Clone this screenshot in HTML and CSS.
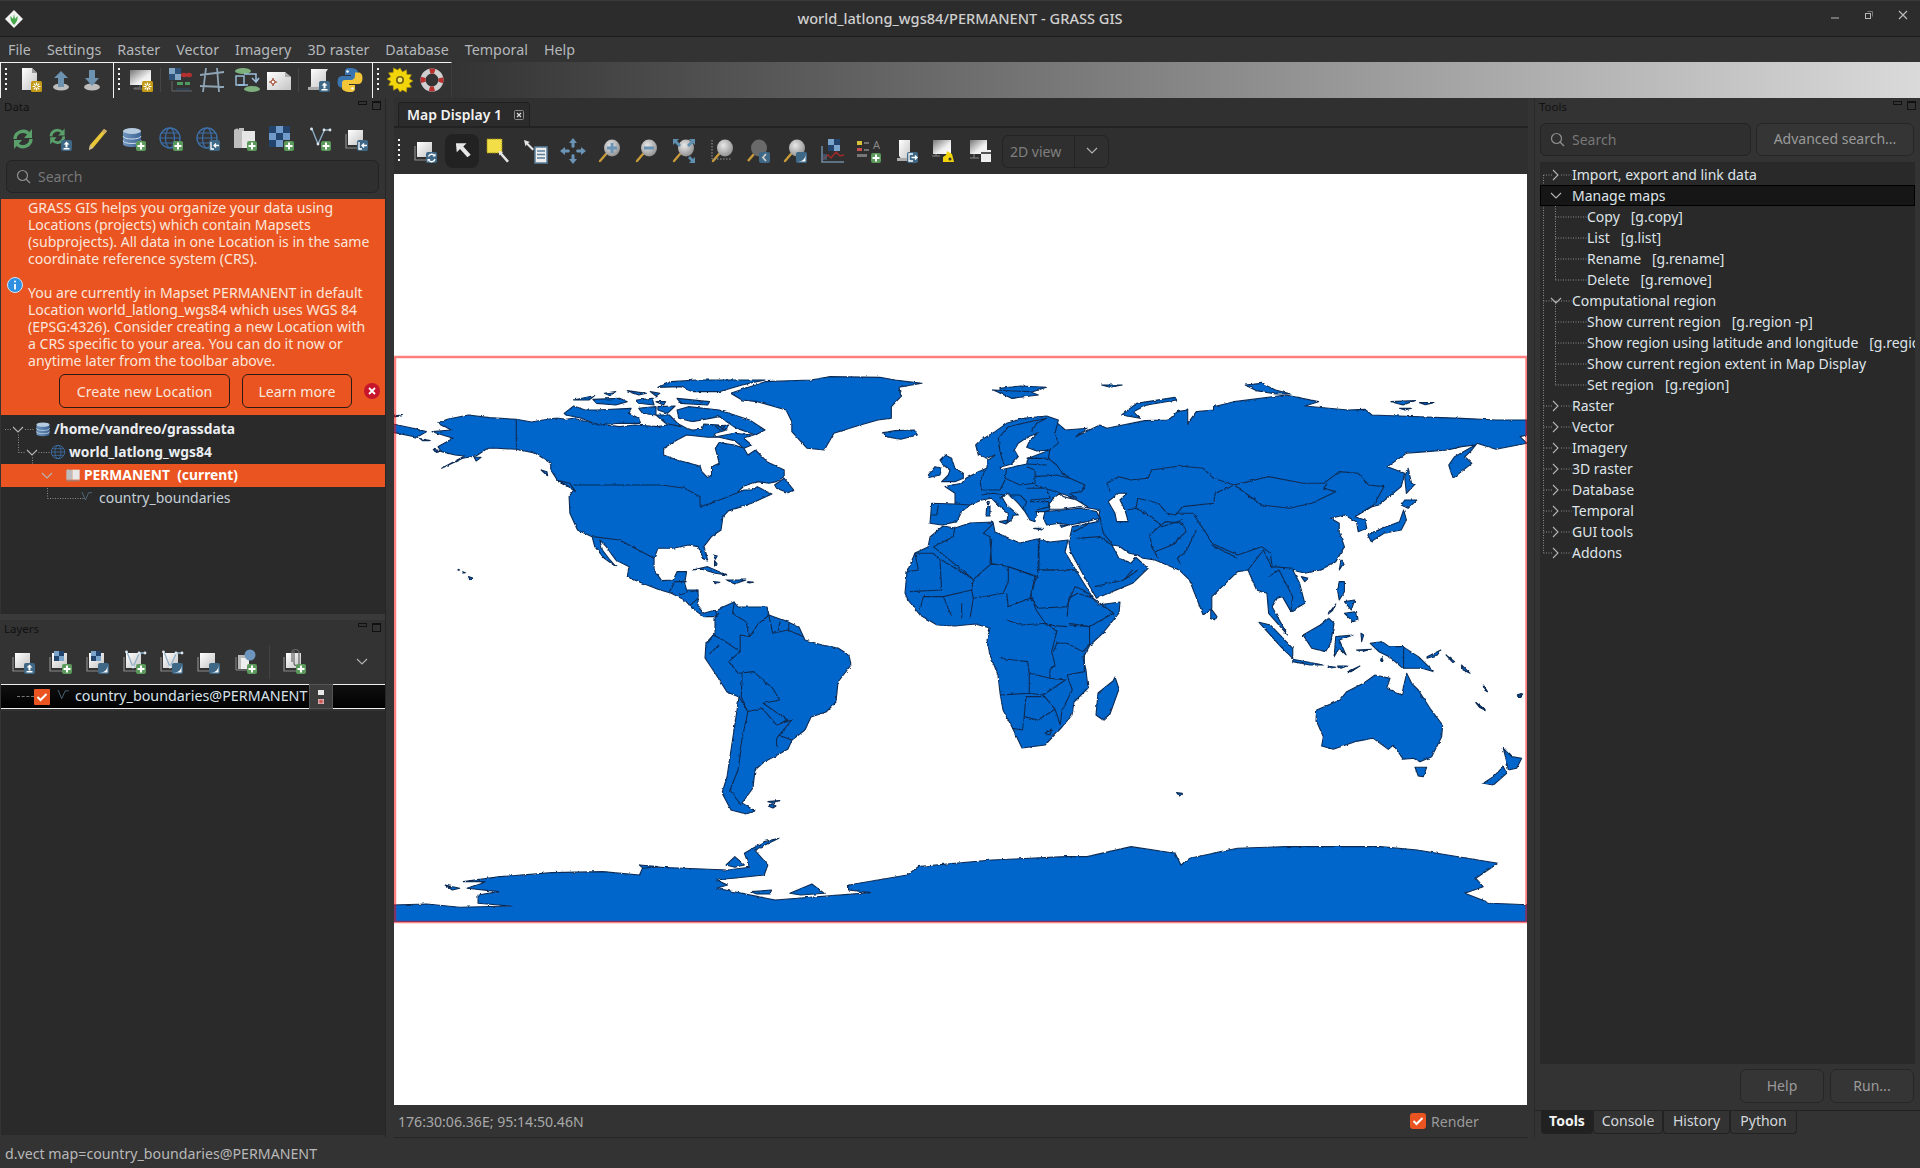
FILE: index.html
```html
<!DOCTYPE html>
<html lang="en">
<head>
<meta charset="utf-8">
<title>world_latlong_wgs84/PERMANENT - GRASS GIS</title>
<link rel="stylesheet" href="styles.css">
</head>
<body>
<svg class="defs" width="0" height="0" aria-hidden="true">
<defs>
<linearGradient id="gw" x1="0" y1="0" x2="1" y2="1"><stop offset="0" stop-color="#fff"/><stop offset="1" stop-color="#c4c4c4"/></linearGradient>
<linearGradient id="gs" x1="0" y1="0" x2="1" y2="1"><stop offset="0" stop-color="#777"/><stop offset=".6" stop-color="#eee"/><stop offset="1" stop-color="#fff"/></linearGradient>
<linearGradient id="gb" x1="0" y1="0" x2="1" y2="0"><stop offset="0" stop-color="#6f94bd"/><stop offset="1" stop-color="#3d6494"/></linearGradient>
<radialGradient id="gg" cx=".4" cy=".35" r=".7"><stop offset="0" stop-color="#e8e8e8"/><stop offset="1" stop-color="#8d8d8d"/></radialGradient>
<clipPath id="clipr"><rect x="394" y="357" width="1133" height="565"/></clipPath>
<g id="base"><path d="M3 8v14h15" fill="none" stroke="#8a8a8a" stroke-width="1.2"/><rect x="5" y="4" width="15" height="15" fill="url(#gw)"/></g>
<g id="plus"><rect x="15" y="15" width="10" height="10" rx="2" fill="#5b9a5b"/><path d="M20 16.500v7M16.500 20h7" stroke="#fff" stroke-width="2"/></g>
<g id="badge"><rect x="14" y="14" width="11" height="11" rx="2" fill="#3f6887"/></g>
<g id="bup"><use href="#badge"/><path d="M19.500 15.500l-3 3h2v3h2v-3h2zM16.500 22v1.500h6V22" fill="#fff"/></g>
<g id="bmoon"><use href="#badge"/><path d="M23.500 16v7.500H16c5 0 7.500-3 7.500-7.500z" fill="#fff"/></g>
<g id="bin"><use href="#badge"/><path d="M16 16v7h3M24 19.500h-5M21 17.500l-2 2 2 2" fill="none" stroke="#fff" stroke-width="1.300"/></g>
<g id="bout"><use href="#badge"/><path d="M20 16h-4v7h4M18.500 19.500h5.500M22 17.500l2 2-2 2" fill="none" stroke="#fff" stroke-width="1.300"/></g>
<g id="brel"><use href="#badge"/><path d="M16.500 18.500a3.500 3.500 0 0 1 6-1M23 21a3.500 3.500 0 0 1-6 1.500" fill="none" stroke="#fff" stroke-width="1.400"/><path d="M23.500 15.500v3h-3zM15.500 24v-3h3z" fill="#fff"/></g>
<g id="bgold"><rect x="14" y="14" width="11" height="11" rx="1.500" fill="#c39a16"/><path d="M19.500 15.500v8M15.500 19.500h8M16.700 16.700l5.600 5.600M22.300 16.700l-5.600 5.600" stroke="#fff" stroke-width="1.200"/><circle cx="19.500" cy="19.500" r="1.300" fill="#c39a16"/></g>
<g id="chk"><path fill="#7aa4cc" d="M7 2h5v5H7zM12 7h5v5h-5z"/><path fill="#23456d" d="M12 2h5v5h-5zM7 7h5v5H7z"/></g>
<g id="vec"><path d="M6 3l6 15 6-13M18 4h6" fill="none" stroke="#8fb0c8" stroke-width="1.300"/><circle cx="5.500" cy="3" r="1.400" fill="#dfe8f0"/><circle cx="12" cy="18" r="1.400" fill="#dfe8f0"/><circle cx="18" cy="4" r="1.400" fill="#dfe8f0"/><circle cx="24" cy="4" r="1.400" fill="#dfe8f0"/></g>
<g id="globe"><circle cx="12" cy="12" r="10" fill="none" stroke="#3d6fa8" stroke-width="1.400"/><ellipse cx="12" cy="12" rx="4.500" ry="10" fill="none" stroke="#3d6fa8" stroke-width="1.200"/><path d="M2 12h20M3.500 7h17M3.500 17h17" stroke="#3d6fa8" stroke-width="1.200"/></g>
<g id="disk"><path d="M2 5v13c0 4 18 4 18 0V5z" fill="url(#gb)"/><ellipse cx="11" cy="5" rx="9" ry="3" fill="#b7cbe0"/><path d="M2 10c0 4 18 4 18 0M2 14.500c0 4 18 4 18 0" fill="none" stroke="#cfdbe8" stroke-width="1"/></g>
<g id="mapset"><path d="M2 5c2-2 4-2 5 0v14H2zM7 4h4v15H7z" fill="#bcbcbc"/><rect x="11" y="4" width="11" height="15" fill="#e8e8e8"/><path d="M2 20h20v1.500H2z" fill="#8f8f8f"/></g>
<g id="glass"><path d="M9 16l-6 7" stroke="#c79a3a" stroke-width="2.400" stroke-linecap="round"/><ellipse cx="15" cy="10" rx="8" ry="8.500" fill="url(#gg)"/></g>
<g id="refresh"><path d="M5 13a8 8 0 0 1 14-5" fill="none" stroke="#5aa06a" stroke-width="3.400"/><path d="M22 3v9h-8z" fill="#5aa06a"/><path d="M21 13a8 8 0 0 1-14 5" fill="none" stroke="#5aa06a" stroke-width="3.400"/><path d="M4 23v-9h8z" fill="#5aa06a"/></g>

<g id="i-new"><path d="M5 1h10l5 5v17H5z" fill="url(#gw)"/><path d="M15 1v5h5z" fill="#999"/><use href="#bgold"/></g>
<g id="i-up"><ellipse cx="13" cy="20" rx="8" ry="3.500" fill="#bdbdbd"/><path d="M13 4l7 7h-4v9h-6v-9H6z" fill="#6d93b0"/></g>
<g id="i-down"><ellipse cx="13" cy="20" rx="8" ry="3.500" fill="#bdbdbd"/><path d="M10 3h6v8h4l-7 8-7-8h4z" fill="#6d93b0"/></g>
<g id="i-mon"><rect x="2" y="3" width="21" height="15" fill="url(#gs)"/><path d="M12 18v3H6v1h12v-1h-4" fill="none" stroke="#777"/><use href="#bgold"/></g>
<g id="i-mod"><path fill="#83a6c4" d="M2 1h6v6H2zM8 7h6v6H8z"/><path fill="#2e527a" d="M8 1h6v6H8zM2 7h6v6H2z"/><ellipse cx="17" cy="8" rx="3" ry="2.200" fill="#b43030"/><ellipse cx="22" cy="8" rx="3" ry="2.200" fill="#b43030"/><path d="M10 15h6v3h-6zM18 15h5v3h-5z" fill="#4e9a60"/><path d="M9 21h14v3H9z" fill="#2f3f50"/><path d="M5 14v10h20" fill="none" stroke="#666"/></g>
<g id="i-grid"><path d="M7 1L4 25M18 1l2 24M1 8l24-3M1 19l24 1" stroke="#8fa4b4" stroke-width="1.800" fill="none"/></g>
<g id="i-flow"><ellipse cx="9" cy="4" rx="8" ry="3" fill="#7eb07e"/><ellipse cx="18" cy="22" rx="8" ry="3" fill="#7eb07e"/><rect x="2" y="9" width="8" height="9" fill="none" stroke="#9ec2e0" stroke-width="1.400"/><path d="M10 7h12v7M18 11l4 4 3-4M14 18H4" fill="none" stroke="#9ec2e0" stroke-width="1.500"/></g>
<g id="i-geo"><path d="M1 5h18l6 5v13H1z" fill="url(#gw)"/><path d="M19 5v5h6z" fill="#aaa"/><path d="M7 11v8M3 15h8" stroke="#9a3a20" stroke-width="1.200"/><circle cx="7" cy="15" r="2" fill="#fff" stroke="#9a3a20"/></g>
<g id="i-script"><path d="M6 2h17l-2 3v16H4c2-1 2-2 2-4z" fill="url(#gw)"/><path d="M3 20h15v3H3z" fill="#aaa"/><use href="#bup"/></g>
<g id="i-py"><path d="M12.800 1C8 1 8 3 8 5v3h6v1H5c-3 0-4.500 2-4.500 6s2 5.500 4 5.500H8v-3.500c0-2 2-4 4-4h6c2 0 3-1 3-3V5c0-2-3-4-8.200-4z" fill="#3a75b0"/><path d="M13.200 25c4.800 0 4.800-2 4.800-4v-3h-6v-1h9c3 0 4.500-2 4.500-6s-2-5.500-4-5.500H18v3.500c0 2-2 4-4 4H8c-2 0-3 1-3 3v5c0 2 3 4 8.200 4z" fill="#f2c637"/><circle cx="10.500" cy="4.500" r="1.300" fill="#fff"/><circle cx="15.500" cy="21.500" r="1.300" fill="#fff"/></g>
<g id="i-gear"><path d="M13 1l2.500 4 4-2.200.3 4.600 4.600.3-2.200 4 3.800 2.300-3.800 2.300 2.200 4-4.600.3-.3 4.600-4-2.200L13 25l-2.500-4-4 2.200-.3-4.600-4.600-.3 2.200-4L0 12l3.800-2.200-2.200-4 4.600-.3.300-4.600 4 2.200z" fill="#f2d40a" stroke="#b09308" stroke-width=".6"/><circle cx="13" cy="13" r="4" fill="#6b5d12"/><circle cx="13" cy="13" r="2.400" fill="#f7e86a"/></g>
<g id="i-help"><circle cx="13" cy="13" r="9" fill="none" stroke="#cfcfcf" stroke-width="5"/><circle cx="13" cy="13" r="9" fill="none" stroke="#b83030" stroke-width="5" stroke-dasharray="5 9.137" stroke-dashoffset="2.500"/></g>
<g id="i-ref2"><g transform="scale(.8)"><use href="#refresh"/></g><use href="#bup"/></g>
<g id="i-pencil"><path d="M20 3l3 2L9 22l-4 2 1-5z" fill="#e8c83a"/><path d="M20 3l3 2-2 2.400-3-2z" fill="#c9a86a"/><path d="M6 19l3 3-4 2z" fill="#d0c0a0"/></g>
<g id="i-dbp"><use href="#disk"/><use href="#plus"/></g>
<g id="i-gp"><use href="#globe"/><use href="#plus"/></g>
<g id="i-gi"><use href="#globe"/><use href="#bin"/></g>
<g id="i-mp"><path d="M2 4c2-2 4-2 5 0v18H2z M7 2h5v20H7z" fill="#bdbdbd"/><rect x="10" y="5" width="13" height="17" fill="#e6e6e6"/><use href="#plus"/></g>
<g id="i-rp"><path fill="#6f9aca" d="M7 0h7v7H7zM0 7h7v7H0zM14 7h7v7h-7zM7 14h7v7H7z"/><path fill="#23456d" d="M0 0h7v7H0zM14 0h7v7h-7zM7 7h7v7H7zM0 14h7v7H0z"/><use href="#plus"/></g>
<g id="i-vp"><use href="#vec"/><use href="#plus"/></g>
<g id="i-bi"><use href="#base"/><use href="#bin"/></g>
<g id="i-bu"><use href="#base"/><use href="#bup"/></g>
<g id="i-brp"><use href="#base"/><use href="#chk"/><use href="#plus"/></g>
<g id="i-brm"><use href="#base"/><use href="#chk"/><use href="#bmoon"/></g>
<g id="i-bvp"><use href="#base"/><use href="#vec"/><use href="#plus"/></g>
<g id="i-bvm"><use href="#base"/><use href="#vec"/><use href="#bmoon"/></g>
<g id="i-bm"><use href="#base"/><use href="#bmoon"/></g>
<g id="i-wms"><path d="M4 8v13h11" fill="none" stroke="#8a8a8a"/><rect x="6" y="6" width="11" height="14" fill="#bbb"/><rect x="9" y="9" width="8" height="11" fill="#eee"/><g transform="translate(12,0) scale(.5)"><circle cx="12" cy="12" r="11" fill="#6d95bd"/></g><use href="#plus"/></g>
<g id="i-clip"><use href="#base"/><path d="M13 2v12a2.500 2.500 0 0 0 5 0V4a3.500 3.500 0 0 0-7 0v9" fill="none" stroke="#666" stroke-width="1.200"/><use href="#plus"/></g>
<g id="i-br"><use href="#base"/><use href="#brel"/></g>
<g id="i-arrow"><path d="M6 4h13l-4 4 9 10-4 3-9-10-4 4z" fill="#e6e6e6" transform="translate(2,2) scale(.82)"/></g>
<g id="i-sel"><rect x="1" y="1" width="15" height="14" fill="#f2de47" stroke="#9d8c1a" stroke-dasharray="1.500 1"/><path d="M13 13l4 1-1 1 7 8-2 1.500-7-8-1 1z" fill="#e6e6e6"/></g>
<g id="i-query"><path d="M1 2l6 2-2 1 6 6-1.500 1.500-6-6-1 2z" fill="#e6e6e6"/><rect x="12" y="9" width="12" height="16" fill="#eee" stroke="#5a7f9c" stroke-width="1.500"/><path d="M14 13h8M14 16.500h8M14 20h8" stroke="#5a7f9c" stroke-width="1.500"/></g>
<g id="i-pan"><path d="M13 0l4 5h-2.500v4l-1.500 1-1.500-1V5H9zM13 26l4-5h-2.500v-4L13 16l-1.500 1v4H9zM0 13l5-4v2.500h4l1 1.500-1 1.500H5V17zM26 13l-5-4v2.500h-4L16 13l1 1.500h4V17z" fill="#6a93b5"/></g>
<g id="i-zi"><use href="#glass"/><path d="M15 5v10M10 10h10" stroke="#6a93b5" stroke-width="3"/></g>
<g id="i-zo"><use href="#glass"/><path d="M10 10h10" stroke="#6a93b5" stroke-width="3"/></g>
<g id="i-zr"><use href="#glass"/><path d="M2 1h6L6 3l4 4-2 2-4-4-2 2zM24 1v6l-2-2-4 4-2-2 4-4-2-2zM24 25h-6l2-2-3-3 2-2 3 3 2-2z" fill="#5f8fb0"/></g>
<g id="i-zs"><g transform="translate(2,0)"><use href="#glass"/></g><path d="M4 2v19h20" fill="none" stroke="#999" stroke-dasharray="1.500 1.500"/></g>
<g id="i-zb"><path d="M9 16l-6 7" stroke="#c79a3a" stroke-width="2.400"/><ellipse cx="14" cy="10" rx="8" ry="8.500" fill="#6a6a6a"/><use href="#badge"/><path d="M21 16l-3 3.500 3 3.500" fill="none" stroke="#ccc" stroke-width="1.800"/></g>
<g id="i-zm"><use href="#glass"/><use href="#bmoon"/></g>
<g id="i-chart"><path fill="#7aa4cc" d="M9 1h6v6H9zM15 7h6v6h-6z"/><path fill="#23456d" d="M15 1h6v6h-6zM9 7h6v6H9z"/><path d="M3 8v16h22" fill="none" stroke="#6f8ba3" stroke-width="1.500"/><path d="M4 21l5-4 3 3 5-6 4 4 4-1" fill="none" stroke="#a02a2a" stroke-width="1.500"/><path d="M4 16h4v6H4z" fill="#4a6a86" opacity=".6"/></g>
<g id="i-legend"><rect x="1" y="3" width="5" height="4" fill="#d8c23a"/><rect x="1" y="10" width="5" height="3" fill="#c85050"/><path d="M8 5h5M8 12h5" stroke="#888" stroke-width="1.500"/><rect x="1" y="16" width="10" height="3" fill="#777"/><text x="17" y="11" class="ic-t">A</text><use href="#plus"/></g>
<g id="i-mapout"><path d="M6 2h11v20H6c2-1 2-2 0-4z" fill="url(#gw)"/><path d="M4 20h10v3H4z" fill="#aaa"/><use href="#bout"/></g>
<g id="i-monimg"><rect x="3" y="2" width="18" height="14" fill="url(#gs)"/><path d="M2 18h8M6 16v2" stroke="#888"/><path d="M13 24v-5l3-2 1-4 5 3 2 8z" fill="#f2d40a"/><circle cx="20" cy="21" r="1.500" fill="#333"/></g>
<g id="i-monw"><rect x="3" y="2" width="17" height="14" fill="url(#gs)"/><path d="M3 20h9M7 16v4" stroke="#888"/><rect x="14" y="12" width="10" height="12" fill="#eee"/><rect x="14" y="14" width="10" height="2" fill="#555"/></g>
<g id="i-vsmall"><path d="M3 3l5 12 5-11M13 4h5" fill="none" stroke="#5b7a90" stroke-width="1.100"/></g>
<g id="logo"><path d="M9 0l9 9-9 9-9-9z" fill="#f2f2f2"/><path d="M9 15C6 12 5 9 5.500 6L8 9l1-5 1 5 2.500-3c.5 3-.5 6-3.500 9z" fill="#45a84a"/></g>
<g id="searchi"><circle cx="6.500" cy="6.500" r="5" fill="none" stroke="#8f8f8f" stroke-width="1.200"/><path d="M10 10l4 4" stroke="#8f8f8f" stroke-width="1.200"/></g>
<g id="chev-d"><path d="M1 1l5 5 5-5" fill="none" stroke="#b5b5b5" stroke-width="1.100"/></g>
<g id="chev-r"><path d="M1 1l5 5-5 5" fill="none" stroke="#b5b5b5" stroke-width="1.100"/></g>
<filter id="rough" filterUnits="userSpaceOnUse" x="380" y="174" width="1160" height="800"><feTurbulence type="fractalNoise" baseFrequency=".22" numOctaves="2" seed="4" result="n"/><feDisplacementMap in="SourceGraphic" in2="n" scale="2.600" xChannelSelector="R" yChannelSelector="G"/></filter>
</defs>
</svg>

<header class="titlebar">
  <svg class="logo" viewBox="0 0 18 18"><use href="#logo"/></svg>
  <span class="title">world_latlong_wgs84/PERMANENT - GRASS GIS</span>
  <div class="winctl">
    <svg class="wc" viewBox="0 0 12 12"><path d="M2 9h8" stroke="#b8b8b8" stroke-width="1"/></svg>
    <svg class="wc" viewBox="0 0 12 12"><rect x="2.500" y="4.500" width="5" height="5" fill="none" stroke="#b8b8b8"/><path d="M4.500 2.500h5v5" fill="none" stroke="#777"/></svg>
    <svg class="wc" viewBox="0 0 12 12"><path d="M2 2l8 8M10 2l-8 8" stroke="#b8b8b8" stroke-width="1.200"/></svg>
  </div>
</header>

<nav class="menubar">
  <span>File</span><span>Settings</span><span>Raster</span><span>Vector</span><span>Imagery</span><span>3D raster</span><span>Database</span><span>Temporal</span><span>Help</span>
</nav>

<div class="toolbar">
  <div class="tseg seg1">
    <i class="grip"></i>
    <svg class="ic" viewBox="0 0 26 26"><use href="#i-new"/></svg>
    <svg class="ic" viewBox="0 0 26 26"><use href="#i-up"/></svg>
    <svg class="ic" viewBox="0 0 26 26"><use href="#i-down"/></svg>
  </div>
  <div class="tseg seg2">
    <i class="grip"></i>
    <svg class="ic" viewBox="0 0 26 26"><use href="#i-mon"/></svg>
    <i class="vsep"></i>
    <svg class="ic" viewBox="0 0 26 26"><use href="#i-mod"/></svg>
    <svg class="ic" viewBox="0 0 26 26"><use href="#i-grid"/></svg>
    <svg class="ic wideb" viewBox="0 0 26 26"><use href="#i-flow"/></svg>
    <svg class="ic" viewBox="0 0 26 26"><use href="#i-geo"/></svg>
    <i class="vsep"></i>
    <svg class="ic" viewBox="0 0 26 26"><use href="#i-script"/></svg>
    <svg class="ic" viewBox="0 0 26 26"><use href="#i-py"/></svg>
  </div>
  <div class="tseg seg3">
    <i class="grip"></i>
    <svg class="ic" viewBox="0 0 26 26"><use href="#i-gear"/></svg>
    <svg class="ic" viewBox="0 0 26 26"><use href="#i-help"/></svg>
  </div>
  <div class="tgrad"></div>
</div>

<main class="main">
  <aside class="leftdock">
    <section class="panel data">
      <div class="ptitle"><span>Data</span><i class="pmin"></i><i class="pmax"></i></div>
      <div class="ptools">
        <svg class="ic" viewBox="0 0 26 26"><use href="#refresh"/></svg>
        <svg class="ic" viewBox="0 0 26 26"><use href="#i-ref2"/></svg>
        <svg class="ic" viewBox="0 0 26 26"><use href="#i-pencil"/></svg>
        <svg class="ic" viewBox="0 0 26 26"><use href="#i-dbp"/></svg>
        <svg class="ic" viewBox="0 0 26 26"><use href="#i-gp"/></svg>
        <svg class="ic" viewBox="0 0 26 26"><use href="#i-gi"/></svg>
        <svg class="ic" viewBox="0 0 26 26"><use href="#i-mp"/></svg>
        <svg class="ic" viewBox="0 0 26 26"><use href="#i-rp"/></svg>
        <svg class="ic" viewBox="0 0 26 26"><use href="#i-vp"/></svg>
        <svg class="ic" viewBox="0 0 26 26"><use href="#i-bi"/></svg>
      </div>
      <div class="searchbox wide"><svg class="si" viewBox="0 0 15 15"><use href="#searchi"/></svg><span>Search</span></div>
      <div class="infobar">
        <div class="infomsg">
          <svg class="infoi" viewBox="0 0 16 16"><circle cx="8" cy="8" r="7.500" fill="#2f8fe0" stroke="#cfe4f5"/><circle cx="8" cy="4.500" r="1" fill="#fff"/><path d="M8 7v5.500" stroke="#fff" stroke-width="1.800"/></svg>
          <p>GRASS GIS helps you organize your data using<br>Locations (projects) which contain Mapsets<br>(subprojects). All data in one Location is in the same<br>coordinate reference system (CRS).<br><br>You are currently in Mapset PERMANENT in default<br>Location world_latlong_wgs84 which uses WGS 84<br>(EPSG:4326). Consider creating a new Location with<br>a CRS specific to your area. You can do it now or<br>anytime later from the toolbar above.</p>
        </div>
        <div class="infobtns">
          <button class="obtn b1">Create new Location</button>
          <button class="obtn b2">Learn more</button>
          <svg class="xi" viewBox="0 0 16 16"><circle cx="8" cy="8" r="8" fill="#c7162b"/><path d="M5 5l6 6M11 5l-6 6" stroke="#fff" stroke-width="1.800"/></svg>
        </div>
      </div>
      <div class="dtree">
        <svg class="dots" viewBox="0 0 386 100" width="386" height="100"><path d="M4 14.500h30M17.500 14.500v23M17.500 37.500h32M31.500 37.500v23M31.500 60.500h33M46.500 60.500v23M46.500 83.500h36"/></svg>
        <div class="drow l0"><svg class="chv" viewBox="0 0 12 8"><use href="#chev-d"/></svg><svg class="ti" viewBox="0 0 22 22"><use href="#disk"/></svg><b>/home/vandreo/grassdata</b></div>
        <div class="drow l1"><svg class="chv" viewBox="0 0 12 8"><use href="#chev-d"/></svg><svg class="ti" viewBox="0 0 24 24"><use href="#globe"/></svg><b>world_latlong_wgs84</b></div>
        <div class="drow l2 sel"><svg class="chv" viewBox="0 0 12 8"><use href="#chev-d"/></svg><svg class="ti" viewBox="0 0 24 24"><use href="#mapset"/></svg><b>PERMANENT  (current)</b></div>
        <div class="drow l3"><svg class="ti" viewBox="0 0 24 24"><use href="#i-vsmall"/></svg><span>country_boundaries</span></div>
      </div>
    </section>
    <div class="sash"></div>
    <section class="panel layers">
      <div class="ptitle"><span>Layers</span><i class="pmin"></i><i class="pmax"></i></div>
      <div class="ptools ltools">
        <svg class="ic" viewBox="0 0 26 26"><use href="#i-bu"/></svg>
        <svg class="ic" viewBox="0 0 26 26"><use href="#i-brp"/></svg>
        <svg class="ic" viewBox="0 0 26 26"><use href="#i-brm"/></svg>
        <svg class="ic" viewBox="0 0 26 26"><use href="#i-bvp"/></svg>
        <svg class="ic" viewBox="0 0 26 26"><use href="#i-bvm"/></svg>
        <svg class="ic" viewBox="0 0 26 26"><use href="#i-bm"/></svg>
        <svg class="ic" viewBox="0 0 26 26"><use href="#i-wms"/></svg>
        <i class="vsep lsep"></i>
        <svg class="ic" viewBox="0 0 26 26"><use href="#i-clip"/></svg>
        <svg class="lchev" viewBox="0 0 12 8"><use href="#chev-d"/></svg>
      </div>
      <div class="lrow">
        <i class="ldots"></i>
        <span class="cbox"><svg viewBox="0 0 16 16"><path d="M3.500 8l3 3 6-6" fill="none" stroke="#fff" stroke-width="2"/></svg></span>
        <svg class="ti lv" viewBox="0 0 24 24"><use href="#i-vsmall"/></svg>
        <span class="ltext">country_boundaries@PERMANENT</span>
        <span class="lctl"><i class="lc1"></i><i class="lc2"></i></span>
      </div>
      <div class="lempty"></div>
    </section>
  </aside>

  <section class="center">
    <div class="tabstrip">
      <div class="tab"><span>Map Display 1</span><svg class="tabx" viewBox="0 0 10 10"><rect x=".5" y=".5" width="9" height="9" rx="1" fill="none" stroke="#8a8a8a"/><path d="M3 3l4 4M7 3L3 7" stroke="#ddd" stroke-width="1.200"/></svg></div>
    </div>
    <div class="maptools">
      <i class="grip"></i>
      <svg class="ic" viewBox="0 0 26 26"><use href="#i-br"/></svg>
      <svg class="ic active" viewBox="0 0 26 26"><use href="#i-arrow"/></svg>
      <svg class="ic" viewBox="0 0 26 26"><use href="#i-sel"/></svg>
      <svg class="ic" viewBox="0 0 26 26"><use href="#i-query"/></svg>
      <svg class="ic" viewBox="0 0 26 26"><use href="#i-pan"/></svg>
      <svg class="ic" viewBox="0 0 26 26"><use href="#i-zi"/></svg>
      <svg class="ic" viewBox="0 0 26 26"><use href="#i-zo"/></svg>
      <svg class="ic" viewBox="0 0 26 26"><use href="#i-zr"/></svg>
      <svg class="ic" viewBox="0 0 26 26"><use href="#i-zs"/></svg>
      <svg class="ic" viewBox="0 0 26 26"><use href="#i-zb"/></svg>
      <svg class="ic" viewBox="0 0 26 26"><use href="#i-zm"/></svg>
      <svg class="ic" viewBox="0 0 26 26"><use href="#i-chart"/></svg>
      <svg class="ic" viewBox="0 0 26 26"><use href="#i-legend"/></svg>
      <svg class="ic" viewBox="0 0 26 26"><use href="#i-mapout"/></svg>
      <svg class="ic" viewBox="0 0 26 26"><use href="#i-monimg"/></svg>
      <svg class="ic" viewBox="0 0 26 26"><use href="#i-monw"/></svg>
      <div class="combo"><span>2D view</span><b><svg viewBox="0 0 12 8"><use href="#chev-d"/></svg></b></div>
    </div>
    <div class="map">
      <svg class="mapsvg" viewBox="394 174 1133 931" preserveAspectRatio="none">
        <g clip-path="url(#clipr)">
        <g filter="url(#rough)">
        <!-- South America in screen space -->
        <path class="land2" d="M715,612 723,607 734,602 738,607 767,607 769,615 788,622 799,627 805,640 822,645 838,648 849,655 851,665 838,682 836,702 826,712 811,717 805,730 792,740 788,749 781,753 764,762 755,770 753,788 742,803 755,811 746,814 731,810 722,793 727,777 731,750 739,697 727,692 715,673 705,658 706,643 715,633Z"/>
        <path class="land2" d="M768,806 772,804 776,806 773,808Z"/>
        <path class="bdl" d="M741,750 738,770 730,790 741,805"/>

        <!-- Africa -->
        <path class="land2" d="M943,526 955,528 970,523 993,522 995,532 1020,543 1037,539 1050,542 1068,540 1065,552 1080,577 1093,598 1098,605 1120,602 1119,613 1103,633 1090,645 1083,658 1086,670 1088,688 1074,702 1072,715 1062,727 1045,745 1022,748 1012,727 1003,710 1000,693 998,675 990,655 987,640 990,628 975,624 955,626 937,625 920,615 908,600 905,593 907,572 915,553 928,547 930,537Z"/>
        <path class="land2" d="M1115,677 1119,689 1110,714 1103,720 1096,715 1098,693 1113,681Z"/>

        <!-- zoom-7 space -->
        <g transform="translate(390,350) scale(.3827,.3333)" class="land">
          <path d="M110,245 160,240 125,218 150,208 205,195 260,203 330,208 370,216 400,210 435,204 460,208 480,205 540,222 600,230 640,225 700,230 750,220 775,235 790,240 815,238 820,222 860,225 880,240 850,250 845,262 900,250 950,255 925,265 945,285 925,295 935,315 955,300 985,335 1030,360 1030,380 1010,395 990,400 960,395 925,408 905,430 925,420 945,420 960,410 985,425 998,432 948,458 920,470 885,482 870,500 865,540 840,560 820,590 830,630 820,628 805,590 780,585 740,595 700,595 690,625 690,660 710,692 740,690 750,665 775,665 770,700 775,720 805,720 805,770 820,790 850,780 855,800 835,800 820,800 790,775 770,750 735,730 700,718 650,695 620,680 625,650 590,630 565,590 548,570 555,600 575,630 590,650 560,625 535,590 528,560 490,540 470,490 468,440 480,420 440,395 420,360 420,340 380,310 330,298 280,295 255,295 225,318 190,325 135,355 195,318 170,315 135,305 125,290 165,265Z"/>
          <path class="sea" d="M775,255 750,270 715,295 715,315 750,330 810,348 815,365 830,383 840,375 840,350 860,340 855,315 850,295 860,278 900,285 925,295 900,272 860,262 830,262 800,258Z"/>
          <path d="M850,228 885,225 880,238 860,240Z"/><path d="M858,228 875,228 870,236Z"/>
          <path d="M890,130 980,95 1100,90 1150,80 1280,82 1320,90 1390,100 1330,112 1335,140 1310,170 1310,205 1275,210 1220,228 1160,250 1135,300 1090,295 1050,245 1050,215 1035,180 960,155 920,150Z"/>
          <path d="M1290,248 1320,242 1370,240 1378,255 1335,268 1295,260Z"/>
          <path d="M735,95 800,90 980,90 920,105 860,125 790,125 760,110 700,112Z"/>
          <path d="M750,145 835,155 830,165 760,160Z"/>
          <path d="M480,150 535,137 520,150Z"/><path d="M560,130 590,125 575,137Z"/><path d="M620,122 670,130 650,135Z"/><path d="M680,125 705,130 695,138Z"/>
          <path d="M530,148 600,145 620,155 590,165 540,160Z"/><path d="M645,150 685,145 690,165 650,160Z"/><path d="M695,155 720,155 715,165Z"/>
          <path d="M650,175 695,170 695,195 660,190Z"/><path d="M700,170 745,168 725,190 700,180Z"/>
          <path d="M455,190 480,168 510,180 540,180 630,175 625,190 650,205 655,220 600,220 545,225 500,205 460,195Z"/>
          <path d="M750,180 780,170 860,180 940,210 980,240 955,255 905,235 860,200 790,215 755,205Z"/>
          <path d="M695,195 730,195 760,230 720,220Z"/>
          <path d="M1005,405 1030,385 1055,420 1040,428 1010,415Z"/><path d="M395,360 410,365 412,378Z"/><path d="M440,392 470,400 485,425 465,408Z"/>
          <path d="M790,660 830,650 880,675 850,670 815,658Z"/><path d="M880,690 930,690 900,702Z"/><path d="M935,695 950,697 938,699Z"/><path d="M845,695 862,697 850,701Z"/><path d="M205,680 218,685 210,690Z"/><path d="M178,658 182,660 178,661Z"/><path d="M190,665 197,668 192,669Z"/>
          <path d="M845,615 855,618 850,628ZM848,632 855,642 848,645Z"/>
          <path d="M0,195 30,197 15,200 0,200Z"/><path d="M0,220 60,235 95,245 70,262 0,245Z"/><path d="M78,266 105,272 85,272Z"/><path d="M113,298 130,302 118,305Z"/><path d="M220,322 238,322 225,333Z"/>
          <path class="bd" d="M330,208 330,298M480,405 710,405 770,415 810,440 810,470 840,460 905,430M530,560 600,570 640,595 690,625M730,725 745,695 775,695M755,735 805,720M780,770 805,745M860,790 848,800"/>
          <path class="bd" d="M900,755 895,790 930,815 940,860 915,855 915,905M940,860 960,825 990,795M990,795 1000,850 1040,840 1080,860M1015,840 1020,815M1042,845 1042,815M830,880 845,855 870,870 915,905 885,935M835,912 860,885M885,935 910,970 950,965 1000,1015 1018,1050 975,1060 1000,1080 1040,1110 1010,1125M920,970 918,1040 935,1085 975,1075M912,1040 935,1085 925,1140 915,1200M975,1078 1010,1125 1050,1110 1010,1165 1010,1195M1015,1155 1050,1170"/>
        </g>

        <!-- Asia in zoom-8 space -->
        <g transform="translate(1000,350) scale(.3444,.3333)" class="land">
          <path d="M150,205 190,240 255,235 220,260 260,240 290,225 310,235 420,212 490,210 515,185 545,180 545,220 570,185 620,180 620,170 680,155 830,135 925,155 885,168 1010,180 1060,178 1080,195 1340,205 1440,210 1530,210 1530,255 1510,260 1530,280 1440,298 1385,280 1370,300 1350,320 1370,340 1315,385 1303,345 1320,320 1380,285 1340,290 1300,300 1240,305 1180,310 1125,350 1175,370 1165,410 1100,465 1080,470 1030,500 1060,510 1065,535 1040,545 1035,515 1000,495 960,505 985,520 985,545 1000,590 975,635 930,660 885,670 850,660 870,700 885,760 845,785 820,740 805,745 790,770 835,855 780,790 775,730 745,720 720,660 690,665 615,740 615,775 590,795 550,690 520,660 450,630 415,625 400,615 375,610 345,588 325,585 345,625 380,640 395,622 430,655 385,700 280,745 245,680 205,605 200,575 210,530 285,515 290,480 262,475 200,440 140,370 140,280Z"/>
          <path d="M0,115 60,108 135,112 95,125 40,145 0,130Z"/><path d="M295,105 355,105 320,112Z"/>
          <path d="M712,105 760,100 800,120 845,132 800,132 745,122Z"/><path d="M1135,155 1205,152 1170,165Z"/><path d="M1218,158 1260,158 1235,164Z"/><path d="M1160,175 1195,175 1175,180Z"/>
          <path d="M1185,355 1195,400 1203,405 1180,430 1175,380Z"/>
          <path d="M1068,555 1110,535 1135,525 1160,515 1172,480 1180,510 1165,540 1115,550 1078,575Z"/><path d="M1175,450 1210,450 1185,475 1165,465Z"/>
          <path d="M990,630 998,640 985,660Z"/><path d="M875,680 895,685 885,695Z"/>
          <path d="M985,695 1000,695 1000,725 985,750 980,720Z"/><path d="M1000,755 1030,750 1020,780Z"/><path d="M1000,790 1035,785 1040,810 1025,815Z"/><path d="M953,792 975,762 965,782Z"/>
          <path d="M612,775 630,800 625,810 612,805Z"/>
          <path d="M752,817 785,825 850,895 850,925 815,890Z"/><path d="M850,928 940,945 900,945 850,935Z"/>
          <path d="M880,855 930,825 955,805 970,820 960,880 945,905 905,895Z"/>
          <path d="M975,860 1025,855 985,870 1005,915 985,895 970,920Z"/>
          <path d="M1075,880 1110,875 1130,890 1170,890 1215,920 1260,965 1225,955 1170,955 1130,920 1100,905Z"/>
          <path d="M1010,965 1045,948 1020,965Z"/><path d="M950,948 975,952 955,955Z"/><path d="M980,948 1008,948 990,955Z"/><path d="M1035,900 1078,898 1050,905Z"/><path d="M1048,850 1056,855 1050,875Z"/><path d="M1108,920 1112,932 1105,932Z"/>
          <path d="M1240,920 1280,900 1270,915 1240,925Z"/><path d="M1295,915 1320,935 1315,938Z"/><path d="M1340,945 1365,970 1345,960Z"/><path d="M1405,1008 1415,1025 1407,1020Z"/><path d="M1382,1058 1408,1080 1392,1072Z"/><path d="M1503,1035 1518,1032 1510,1042Z"/>
          <path class="bd" d="M310,400 345,380 380,390 430,385 440,360 520,348 590,355 620,385 680,405 780,380 880,400 940,400 985,365 1040,370 1070,405 1115,410 1085,465M680,405 720,435 760,465 840,475 905,460 975,425 940,415 950,400M680,405 625,430 620,460 530,470 510,495 485,490 460,460 400,445 395,475 370,480M310,400 320,425M395,475 440,500 470,530 530,510M435,550 440,590 460,625M440,550 480,515 530,520 540,545 500,585 450,605M570,540 540,605 515,625 525,645M510,490 560,490 605,560 615,580 690,615 760,590 785,610 790,650 850,655M615,585 690,625M720,660 765,600 790,655M780,680 810,660 850,740 845,785M225,565 290,560 325,585M290,500 300,550 325,580M215,545 260,520M275,710 360,690 385,660M360,690 400,660M1172,892 1172,955M1030,500 1085,465"/>
          <path class="bd" d="M113,565 113,660 215,660M25,650 105,680 90,740 105,780 135,825 195,830M195,800 200,745 225,730 270,745 330,790 260,830 200,820M20,810 60,825 135,820 165,845 150,905 160,945 145,960 145,985 85,970 80,935 0,925M200,825 260,830 260,885 240,905 195,880 165,880M155,905 165,880M245,910 245,965 195,975M0,1035 85,1030 85,970M85,1030 125,1035 190,990 145,985M75,1040 70,1105 65,1140 35,1135M75,1040 130,1040 160,1078 110,1110 70,1100M195,975 210,1020 180,1080 175,1125M130,1150 150,1140 145,1155 130,1150M160,1078 175,1125"/>
        </g>

        <!-- Europe in zoom-10 space -->
        <g transform="translate(880,390) scale(.3333)" class="land">
          <path d="M287,165 300,152 345,125 380,100 430,85 500,78 535,90 525,130 535,160 510,178 505,205 530,225 548,250 570,265 615,285 605,305 570,310 590,325 540,310 520,325 505,345 510,360 495,365 470,365 465,395 450,390 435,365 415,340 385,310 365,320 380,345 415,375 400,375 395,390 380,400 385,370 355,345 335,325 305,330 270,345 245,365 230,395 185,405 150,400 155,340 225,342 225,310 195,290 245,280 258,265 295,245 320,235 325,210 340,200 345,195 320,205 295,195Z"/>
          <path d="M495,365 545,360 600,355 650,365 660,385 620,395 570,405 540,400 500,405 490,385Z"/>
          <path d="M180,210 195,195 215,205 225,235 250,250 250,265 225,275 185,275 205,255 210,240 190,225Z"/><path d="M145,255 165,230 185,235 180,255 150,262Z"/>
          <path d="M320,350 330,350 330,378 318,378Z"/><path d="M320,335 328,335 325,345Z"/><path d="M358,395 385,390 378,402Z"/><path d="M460,415 490,415 485,420Z"/><path d="M540,405 565,405 545,412Z"/>
          <path d="M725,75 770,40 885,22 890,30 800,45 760,65 780,85Z"/>
          <path d="M340,0 450,5 475,15 395,25Z"/>
          <path class="sea" d="M475,128 445,140 415,160 403,180 415,200 395,222 360,232 370,238 440,222 445,205 510,180 470,183 440,172 450,150Z"/>
          <path class="sea" d="M505,345 520,325 540,310 550,320 590,330 630,355 600,350 545,358 510,358Z"/>
          <path class="sea" d="M690,330 715,310 740,310 720,330 735,360 745,395 710,395 705,370 685,335Z"/>
          <path class="bd" d="M500,85 450,95 385,110 355,145 360,185 372,225M500,85 470,100 455,125M440,205 510,205M440,222 500,225M380,238 375,265 420,285 465,280 465,240 440,230M315,240 300,275 305,300 360,300 375,270M465,260 530,255 570,265M465,285 510,300 540,310M305,315 340,310 375,315 360,325M440,295 500,295 510,325 450,330M450,335 505,335 510,350 470,360M385,315 420,315 440,335 430,360M175,345 170,375 150,375M225,342 270,345M225,410 220,440 160,470M160,490 105,490 115,540 85,545M160,490 180,510 185,600 90,605M160,470 280,568 335,520 330,440 310,430 340,400M335,450 330,520 385,530 475,560 475,450M475,540 585,540M185,510 280,568 275,600 190,620 130,620M385,530 385,575 370,610 280,625 275,600M465,560 450,625 475,655 560,650 585,590 610,600 640,625M380,610 385,650 450,625M130,620 120,660M190,620 215,680M280,625 270,685M245,640 245,690"/>
        </g>

        <!-- Australia etc in zoom-11 space -->
        <g transform="translate(1300,650) scale(.3333)" class="land">
          <path d="M50,180 120,150 140,125 190,100 225,75 270,85 260,115 305,135 320,70 335,100 355,120 390,175 428,225 425,260 395,320 360,335 340,325 310,328 280,285 265,298 220,265 165,275 100,298 65,288 70,260 48,210Z"/>
          <path d="M345,352 380,352 370,380 355,378Z"/>
          <path d="M610,295 635,320 665,325 650,355 625,360 620,335Z"/><path d="M610,350 620,370 580,405 550,400 580,380Z"/>
          <path d="M550,105 562,125 552,115Z"/><path d="M528,158 555,178 540,172Z"/><path d="M652,135 665,130 660,140Z"/>
        </g>

        <!-- Antarctica in zoom-9 space -->
        <g transform="translate(390,750) scale(.7337,.3333)" class="land">
          <path d="M0,465 50,462 95,472 165,468 120,460 120,435 148,425 105,415 130,395 100,395 150,380 220,368 290,365 340,375 345,350 400,355 460,360 490,352 483,310 510,275 530,265 497,300 515,345 510,375 445,390 460,405 445,415 525,450 655,428 625,420 625,405 705,375 720,350 820,330 920,320 950,320 1010,290 1070,310 1078,345 1090,325 1155,295 1220,290 1350,290 1400,300 1510,340 1480,385 1490,410 1465,430 1500,460 1560,465 1560,560 0,560Z"/>
          <path d="M75,405 95,415 85,420Z"/><path d="M458,345 470,320 483,345 470,352Z"/><path d="M340,345 365,350 345,355Z"/>
          <path d="M492,425 520,420 518,432 500,432Z"/>
          <path d="M545,430 575,402 592,430 560,435Z"/>
          <path d="M1072,128 1080,130 1076,138Z"/><path d="M515,155 530,152 522,160Z"/>
        </g>
        </g>
        </g>
        <rect class="region" x="395" y="357" width="1131.500" height="565"/>
      </svg>
    </div>
    <div class="mapstatus">
      <span class="coords">176:30:06.36E; 95:14:50.46N</span>
      <span class="cbox rcb"><svg viewBox="0 0 16 16"><path d="M3.500 8l3 3 6-6" fill="none" stroke="#fff" stroke-width="2"/></svg></span>
      <span class="render">Render</span>
    </div>
  </section>

  <aside class="rightdock">
    <div class="ptitle"><span>Tools</span><i class="pmin"></i><i class="pmax"></i></div>
    <div class="rsearch">
      <div class="searchbox narrow"><svg class="si" viewBox="0 0 15 15"><use href="#searchi"/></svg><span>Search</span></div>
      <button class="gbtn adv">Advanced search...</button>
    </div>
    <div class="rtree">
      <svg class="dots" viewBox="0 0 374 400" width="374" height="400"><path d="M3.500 13v378M3.500 13h28M3.500 34h28M3.500 139h28M3.500 244h28M3.500 265h28M3.500 286h28M3.500 307h28M3.500 328h28M3.500 349h28M3.500 370h28M3.500 391h28"/><path d="M15.500 34v84M15.500 55h31M15.500 76h31M15.500 97h31M15.500 118h31M15.500 139v84M15.500 160h31M15.500 181h31M15.500 202h31M15.500 223h31"/></svg>
      <div class="trow t0"><svg class="chr" viewBox="0 0 8 12"><use href="#chev-r"/></svg>Import, export and link data</div>
      <div class="trow t0 tsel"><svg class="chd" viewBox="0 0 12 8"><use href="#chev-d"/></svg>Manage maps</div>
      <div class="trow t1">Copy   [g.copy]</div>
      <div class="trow t1">List   [g.list]</div>
      <div class="trow t1">Rename   [g.rename]</div>
      <div class="trow t1">Delete   [g.remove]</div>
      <div class="trow t0"><svg class="chd" viewBox="0 0 12 8"><use href="#chev-d"/></svg>Computational region</div>
      <div class="trow t1">Show current region   [g.region -p]</div>
      <div class="trow t1">Show region using latitude and longitude   [g.region -l]</div>
      <div class="trow t1">Show current region extent in Map Display</div>
      <div class="trow t1">Set region   [g.region]</div>
      <div class="trow t0"><svg class="chr" viewBox="0 0 8 12"><use href="#chev-r"/></svg>Raster</div>
      <div class="trow t0"><svg class="chr" viewBox="0 0 8 12"><use href="#chev-r"/></svg>Vector</div>
      <div class="trow t0"><svg class="chr" viewBox="0 0 8 12"><use href="#chev-r"/></svg>Imagery</div>
      <div class="trow t0"><svg class="chr" viewBox="0 0 8 12"><use href="#chev-r"/></svg>3D raster</div>
      <div class="trow t0"><svg class="chr" viewBox="0 0 8 12"><use href="#chev-r"/></svg>Database</div>
      <div class="trow t0"><svg class="chr" viewBox="0 0 8 12"><use href="#chev-r"/></svg>Temporal</div>
      <div class="trow t0"><svg class="chr" viewBox="0 0 8 12"><use href="#chev-r"/></svg>GUI tools</div>
      <div class="trow t0"><svg class="chr" viewBox="0 0 8 12"><use href="#chev-r"/></svg>Addons</div>
    </div>
    <div class="rbtns"><button class="gbtn hb">Help</button><button class="gbtn hb">Run...</button></div>
    <div class="rtabs">
      <span class="rt on">Tools</span><span class="rt c2">Console</span><span class="rt c3">History</span><span class="rt c4">Python</span>
    </div>
  </aside>
</main>

<footer class="statusbar">d.vect map=country_boundaries@PERMANENT</footer>
</body>
</html>
```
FILE: styles.css
```css
*{box-sizing:border-box}
html,body{margin:0;padding:0}
body{width:1920px;height:1168px;overflow:hidden;background:#333;color:#ddd;font-family:"Noto Sans","Open Sans",sans-serif;font-size:14px;display:flex;flex-direction:column}
.defs{position:absolute}
.ic-t{font-size:11px;fill:#888;font-family:"Noto Sans",sans-serif}
i{display:block;font-style:normal}
.ic{width:26px;height:26px;flex:none;display:block}

.titlebar{height:37px;flex:none;background:#2c2c2c;border-bottom:1px solid #1b1b1b;border-top:1px solid #3a3a3a;display:flex;align-items:center;padding-left:5px;position:relative}
.logo{width:18px;height:18px}
.title{flex:1;text-align:center;font-size:14.600px;font-weight:500;color:#cfcfcf;margin-left:-23px;padding-bottom:2px}
.winctl{position:absolute;right:11px;top:8px;display:flex;gap:22px}
.wc{width:12px;height:12px;display:block}

.menubar{height:25px;flex:none;background:#333;display:flex;align-items:center;padding-left:8px;gap:16px;font-size:14.300px;color:#b4b8bc}

.toolbar{height:36px;flex:none;display:flex;background:#333}
.tseg{height:36px;border-top:1px solid #f0f0f0;border-left:1px solid #f0f0f0;display:flex;align-items:center;gap:6px;background:#333;padding-bottom:2px}
.seg1{width:113px;padding-left:4px;gap:5px}
.seg2{width:259px;padding-left:4px}
.seg3{width:80px;padding-left:4px;border-right:1px solid #3c3c3c}
.tgrad{flex:1;background:linear-gradient(90deg,#333,#dadada)}
.grip{width:2px;height:24px;flex:none;background:repeating-linear-gradient(#f2f2f2 0 2px,transparent 2px 5px);margin-right:2px}
.seg1 .grip{margin-right:5px}
.vsep{width:1px;height:24px;flex:none;background:#444}
.wideb{margin-left:3px}

.main{height:1040px;flex:none;display:flex;align-items:stretch}
.leftdock{width:386px;flex:none;display:flex;flex-direction:column;border-right:1px solid #262626}
.panel{display:flex;flex-direction:column}
.data{height:516px}
.sash{height:6px;flex:none;background:#3a3a3a}
.layers{flex:1}
.ptitle{height:20px;flex:none;display:flex;align-items:flex-start;padding:2px 4px 0;font-size:11.500px;line-height:14px;color:#111;gap:5px}
.ptitle span{flex:1}
.pmin{width:9px;height:4px;border:1px solid #111;margin-top:1px}
.pmax{width:9px;height:9px;border:1px solid #111;border-top-width:2px;margin-top:1px}
.ptools{height:42px;flex:none;display:flex;align-items:center;gap:11px;padding-left:10px}

.searchbox{height:33px;border:1px solid #232323;border-radius:6px;background:#2f2f2f;display:flex;align-items:center;gap:7px;padding-left:9px;color:#777;font-size:14px}
.wide{margin:0 6px;flex:none}
.narrow{width:211px;flex:none}
.si{width:15px;height:15px;flex:none}

.infobar{margin:6px 0 0 1px;height:216px;flex:none;background:#e95420;color:#fbe6dc;display:flex;flex-direction:column}
.infomsg{display:flex;align-items:center;height:171px;flex:none}
.infoi{width:16px;height:16px;flex:none;margin:0 5px 0 6px}
.infomsg p{margin:-1px 0 0;font-size:14.100px;line-height:17px;flex:1;white-space:nowrap;letter-spacing:-.02px}
.infobtns{display:flex;align-items:center;height:34px;margin-top:4px;padding-left:58px}
.obtn{height:34px;background:transparent;border:1px solid #2a1a14;border-radius:6px;color:#fbe6dc;font:14.200px "Noto Sans",sans-serif;padding:0}
.b1{width:171px}
.b2{width:110px;margin-left:12px}
.xi{width:16px;height:16px;margin-left:12px;flex:none}

.dtree{flex:1;background:#2a2a2a;position:relative;margin-left:1px}
.dots{position:absolute;left:0;top:0;pointer-events:none}
.dots path{fill:none;stroke:#8d8d8d;stroke-width:1;stroke-dasharray:1 1.500}
.drow{height:23px;display:flex;align-items:center;position:relative;white-space:pre;color:#eaeef2;font-size:14px;padding-bottom:2px}
.drow:first-of-type{margin-top:3px}
.drow b{font-weight:700;font-size:13.800px}
.chv{width:12px;height:8px;background:#2a2a2a;position:absolute;top:8px}
.ti{width:16px;height:16px;flex:none;margin-right:3px}
.l0{padding-left:34px}.l0 .chv{left:11px}
.l1{padding-left:49px}.l1 .chv{left:25px}
.l2{padding-left:64px}.l2 .chv{left:40px;background:none}
.l3{padding-left:79px;color:#c6d0d8}
.sel{background:#e95420;color:#fff}

.ltools{height:44px;gap:11px}
.lsep{height:34px}
.lchev{width:12px;height:8px;margin-left:38px}
.lrow{height:25px;flex:none;background:linear-gradient(#101010,#000);border-top:1px solid #eee;border-bottom:1px solid #eee;display:flex;align-items:center;margin-left:1px;padding-left:16px;color:#d8e2ea}
.ldots{width:17px;border-top:1px dashed #777}
.cbox{width:16px;height:16px;flex:none;background:#e95420;border-radius:1px;display:block}
.cbox svg{display:block}
.lv{margin:0 2px 0 6px;width:17px;height:17px}
.ltext{font-size:14.300px;width:234px;white-space:nowrap;padding-bottom:2px}
.lctl{width:24px;height:25px;background:#3c3c3c;border:1px solid #555;display:flex;flex-direction:column;align-items:center;justify-content:center;gap:4px}
.lc1{width:6px;height:5px;background:#e8e8e8}
.lc2{width:6px;height:5px;background:#c33 radial-gradient(#c33,#ddd)}
.lempty{flex:1;background:#2a2a2a;margin:2px 0 3px 1px}

.center{width:1134px;flex:none;margin-left:8px;display:flex;flex-direction:column}
.tabstrip{height:30px;flex:none;padding:4px 0 0 4px;border-bottom:2px solid #222;background:#303030}
.tab{width:132px;height:24px;background:#2b2b2b;border:1px solid #1f1f1f;border-bottom:none;border-radius:4px 4px 0 0;display:flex;align-items:center;padding-left:8px;gap:12px;font-weight:600;font-size:14px;color:#f2f2f2;white-space:nowrap}
.tabx{width:10px;height:10px;flex:none;margin-left:auto;margin-right:6px}
.maptools{height:46px;flex:none;display:flex;align-items:center;gap:11px;padding-left:4px;background:#2f2f2f}
.maptools .grip{margin-right:1px}
.active{border-radius:4px;background:#222;box-shadow:0 0 0 4px #222}
.combo{width:107px;height:33px;border:1px solid #232323;border-radius:6px;display:flex;align-items:center;color:#7f7f7f;font-size:14px;background:#2f2f2f;margin-left:-2px}
.combo span{width:71px;padding-left:7px}
.combo b{flex:1;height:100%;border-left:1px solid #232323;display:flex;align-items:center;justify-content:center}
.combo svg{width:12px;height:8px}
.map{height:931px;flex:none;background:#fff;margin-right:1px}
.mapsvg{width:100%;height:100%;display:block}
.land path,.land2{fill:#0066cc;stroke:#0d2c55;stroke-width:1.100;vector-effect:non-scaling-stroke;stroke-linejoin:round}
.land path.bd,.bdl{fill:none;stroke:#0d2c55;stroke-width:1.100;vector-effect:non-scaling-stroke}
.land path.sea{fill:#fff}
.region{fill:none;stroke:rgba(255,0,0,.5);stroke-width:2.500}
.mapstatus{flex:1;display:flex;align-items:center;padding-left:4px;background:#333;border-bottom:1px solid #262626;font-size:14.100px;color:#a8a8a8}
.coords{width:1012px}
.rcb{border-radius:3px}
.render{margin-left:5px;color:#9a9a9a}

.rightdock{flex:1;margin-left:6px;border-left:1px solid #2a2a2a;display:flex;flex-direction:column;min-width:0}
.rsearch{height:38px;flex:none;display:flex;gap:5px;padding:5px 0 0 5px}
.gbtn{height:33px;background:#353535;border:1px solid #262626;border-radius:6px;color:#9a9a9a;font:14px "Noto Sans",sans-serif;padding:0 0 2px}
.adv{width:158px}
.rtree{height:902px;flex:none;margin:6px 5px 0 5px;background:#292929;position:relative;overflow:hidden;padding-top:2px}
.trow{height:21px;display:flex;align-items:center;white-space:pre;color:#dfe4e8;position:relative;font-size:14px}
.t0{padding-left:32px}
.t1{padding-left:47px}
.tsel{background:#161616;box-shadow:inset 0 0 0 1px #000}
.chr{width:8px;height:12px;position:absolute;left:12px;top:5px;background:#292929}
.chd{width:12px;height:8px;position:absolute;left:10px;top:7px;background:none}
.rbtns{height:46px;flex:none;display:flex;justify-content:flex-end;gap:6px;padding:5px 6px 0 0}
.hb{width:84px;height:34px}
.rtabs{height:27px;flex:none;border-top:1px solid #222;display:flex;padding-left:6px;font-size:14px;color:#d4d8dc}
.rt{height:23px;border:1px solid #222;border-top:none;border-radius:0 0 4px 4px;display:flex;align-items:center;justify-content:center;padding-bottom:3px}
.on{width:52px;background:#212121;font-weight:700;color:#f2f2f2}
.c2{width:70px}.c3{width:67px}.c4{width:67px}

.statusbar{height:30px;flex:none;background:#333;display:flex;align-items:center;padding-left:5px;font-size:14.200px;color:#b8b8b8}
```
